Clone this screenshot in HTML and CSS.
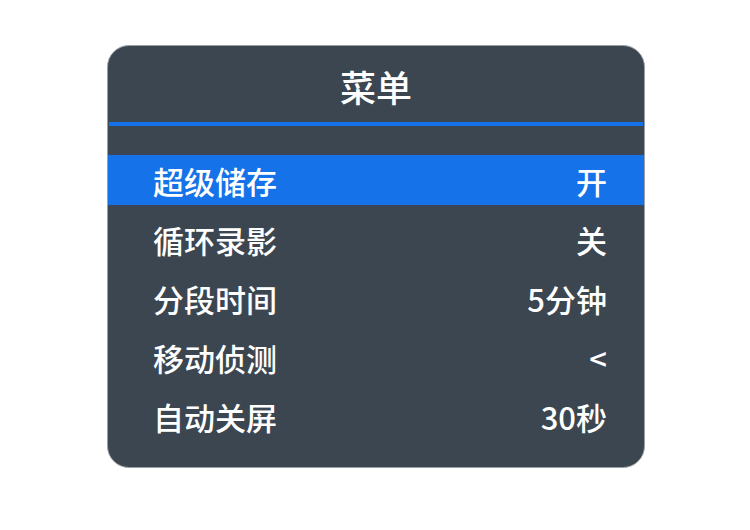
FILE: index.html
```html
<!DOCTYPE html>
<html lang="zh-CN">
<head>
    <meta charset="UTF-8">
    <meta name="viewport" content="width=device-width, initial-scale=1.0">
    <title>菜单</title>
    <link rel="stylesheet" href="styles.css">
</head>
<body>
    <div class="menu">
        <div class="menu-title">菜单</div>
        <div class="menu-list">
            <div class="menu-item active"><span>超级储存</span><span>开</span></div>
            <div class="menu-item"><span>循环录影</span><span>关</span></div>
            <div class="menu-item"><span>分段时间</span><span>5分钟</span></div>
            <div class="menu-item"><span>移动侦测</span><span>&lt;</span></div>
            <div class="menu-item"><span>自动关屏</span><span>30秒</span></div>
        </div>
    </div>
</body>
</html>
```

FILE: styles.css
```css
body {
    margin: 0;
    background-color: #FFFFFF;
    font-family: "Noto Sans CJK SC", "Noto Sans", sans-serif;
    color: white;
}
.menu {
    box-sizing: border-box;
    width: 538px;
    height: 423px;
    margin: 45px 0 0 107px;
    background-color: #3B4651;
    border: 1px solid #9AA0A6;
    border-radius: 22px;
    overflow: hidden;
}
.menu-title {
    box-sizing: border-box;
    height: 80px;
    padding-top: 4px;
    display: flex;
    align-items: center;
    justify-content: center;
    font-size: 36px;
    font-weight: 500;
    border-bottom: 4px solid #1572E8;
    margin: 0 1px;
}
.menu-list {
    display: flex;
    flex-direction: column;
    gap: 9px;
    padding-top: 29px;
}
.menu-item {
    height: 50px;
    display: flex;
    align-items: center;
    justify-content: space-between;
    padding: 0 37px 0 45px;
    font-size: 31px;
    font-weight: 500;
}
.menu-item.active {
    background-color: #1572E8;
}
```
